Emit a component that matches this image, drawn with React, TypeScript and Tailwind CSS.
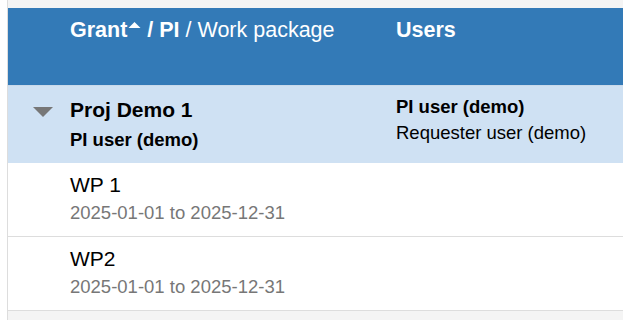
const packages = [
  { name: "WP 1", start: "2025-01-01", end: "2025-12-31" },
  { name: "WP2", start: "2025-01-01", end: "2025-12-31" },
];

function SortCaret() {
  return (
    <svg width="13" height="8" viewBox="0 0 13 8" className="mb-[13px] ml-[1px] inline-block">
      <path d="M0.5 7 L6.5 1 L12.5 7 Z" fill="currentColor" />
    </svg>
  );
}

function ExpandToggle() {
  return (
    <svg width="20" height="10" viewBox="0 0 20 10" className="block">
      <path d="M0 0 H20 L10 10 Z" fill="#777777" />
    </svg>
  );
}

export default function App() {
  return (
    <div
      className="h-[320px] w-[623px] overflow-hidden bg-white"
      style={{ fontFamily: '"Liberation Sans", Arial, sans-serif' }}
    >
      <div className="ml-[7px] h-full border-l border-[#dddddd] bg-[#f4f4f4] pt-[8px]">
        {/* header */}
        <div className="flex h-[78px] border-b border-[#c9d9ea] bg-[#337ab7] text-[21.5px] leading-[24px] text-white">
          <div className="w-[62px] shrink-0" />
          <div className="w-[326px] shrink-0 pt-[10px]">
            <span className="font-bold">Grant</span>
            <SortCaret />
            <span className="font-bold"> / PI</span>
            <span> / Work package</span>
          </div>
          <div className="pt-[10px] font-bold">Users</div>
        </div>

        {/* grant row */}
        <div className="flex h-[77px] bg-[#cfe1f3] text-black">
          <div className="flex w-[62px] shrink-0 justify-center pt-[21px] pl-[8px]">
            <ExpandToggle />
          </div>
          <div className="w-[326px] shrink-0 pt-[12px]">
            <div className="text-[21px] font-bold leading-[24px]">Proj Demo 1</div>
            <div className="mt-[7px] text-[18.5px] font-bold leading-[22px]">PI user (demo)</div>
          </div>
          <div className="pt-[10px] text-[18.5px] leading-[22px]">
            <div className="font-bold">PI user (demo)</div>
            <div className="mt-[4px]">Requester user (demo)</div>
          </div>
        </div>

        {/* work packages */}
        {packages.map((wp) => (
          <div key={wp.name} className="flex h-[74px] border-b border-[#dddddd] bg-white">
            <div className="w-[62px] shrink-0" />
            <div className="pt-[10px]">
              <div className="text-[21px] leading-[24px] text-black">{wp.name}</div>
              <div className="mt-[5px] text-[18.5px] leading-[22px] text-[#777777]">
                {wp.start} to {wp.end}
              </div>
            </div>
          </div>
        ))}
      </div>
    </div>
  );
}
